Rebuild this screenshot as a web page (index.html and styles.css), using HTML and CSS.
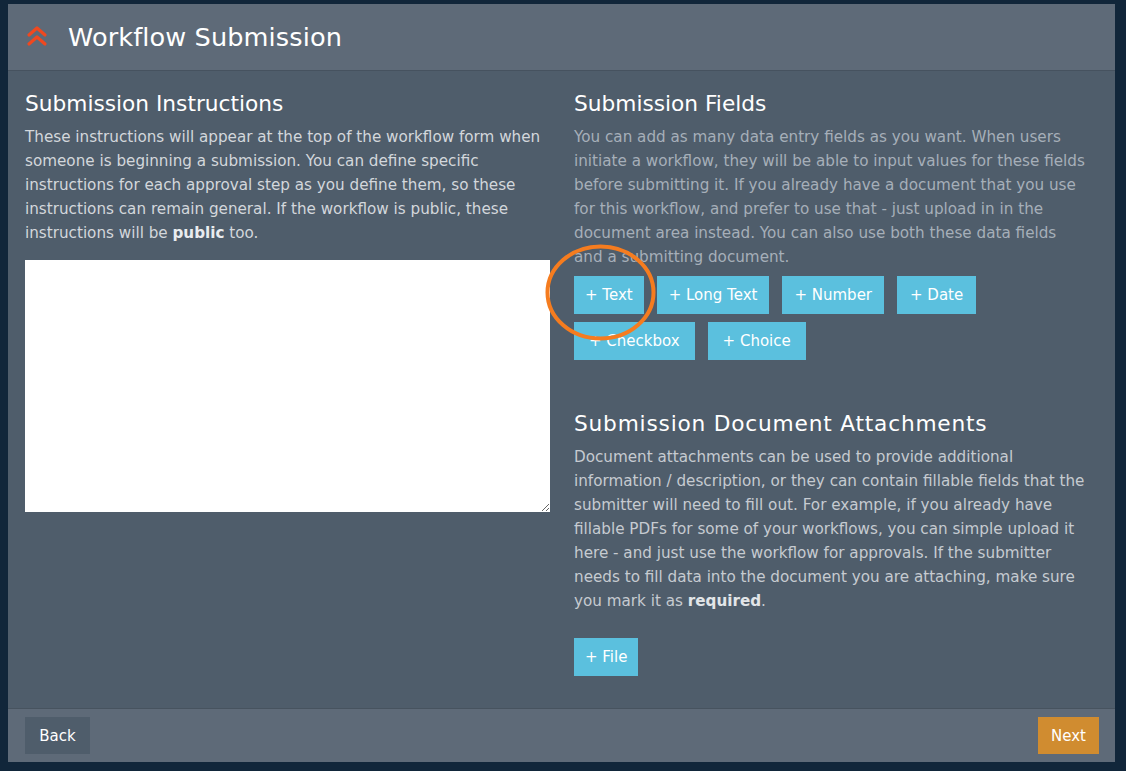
FILE: index.html
```html
<!DOCTYPE html>
<html lang="en">
<head>
<meta charset="utf-8">
<title>Workflow Submission</title>
<link rel="stylesheet" href="styles.css">
</head>
<body>
<div class="panel">
  <header class="header">
    <svg class="logo" width="22" height="22" viewBox="0 0 22 22" aria-hidden="true">
      <polyline points="3,10 11,3 19,10" fill="none" stroke="#f0481f" stroke-width="3.2" stroke-linecap="round" stroke-linejoin="round"/>
      <polyline points="3,19 11,12 19,19" fill="none" stroke="#f0481f" stroke-width="3.2" stroke-linecap="round" stroke-linejoin="round"/>
    </svg>
    <h1 class="title">Workflow Submission</h1>
  </header>
  <main class="content">
    <section class="col">
      <h2 class="heading">Submission Instructions</h2>
      <p class="text text-light">These instructions will appear at the top of the workflow form when<br>someone is beginning a submission. You can define specific<br>instructions for each approval step as you define them, so these<br>instructions can remain general. If the workflow is public, these<br>instructions will be <b>public</b> too.</p>
      <textarea class="instructions"></textarea>
    </section>
    <section class="col">
      <h2 class="heading">Submission Fields</h2>
      <p class="text text-dim">You can add as many data entry fields as you want. When users<br>initiate a workflow, they will be able to input values for these fields<br>before submitting it. If you already have a document that you use<br>for this workflow, and prefer to use that - just upload in in the<br>document area instead. You can also use both these data fields<br>and a submitting document.</p>
      <div class="field-buttons">
        <button class="btn btn-info btn-narrow">+ Text</button>
        <button class="btn btn-info">+ Long Text</button>
        <button class="btn btn-info">+ Number</button>
        <button class="btn btn-info btn-date">+ Date</button>
        <button class="btn btn-info btn-wide">+ Checkbox</button>
        <button class="btn btn-info btn-wide">+ Choice</button>
        <svg class="highlight" width="113" height="99" viewBox="0 0 113 99" aria-hidden="true">
          <ellipse cx="56.5" cy="49.5" rx="53" ry="46" fill="none" stroke="#f57c1f" stroke-width="4"/>
        </svg>
      </div>
      <h2 class="heading heading-attach">Submission Document Attachments</h2>
      <p class="text text-mid">Document attachments can be used to provide additional<br>information / description, or they can contain fillable fields that the<br>submitter will need to fill out. For example, if you already have<br>fillable PDFs for some of your workflows, you can simple upload it<br>here - and just use the workflow for approvals. If the submitter<br>needs to fill data into the document you are attaching, make sure<br>you mark it as <b>required</b>.</p>
      <div class="file-row">
        <button class="btn btn-info btn-file">+ File</button>
      </div>
    </section>
  </main>
  <footer class="footer">
    <button class="btn btn-back">Back</button>
    <button class="btn btn-next">Next</button>
  </footer>
</div>
</body>
</html>
```
FILE: styles.css
```css
* { box-sizing: border-box; }

html, body {
  margin: 0;
  padding: 0;
}

body {
  background: #11263a;
  font-family: "DejaVu Sans", "Liberation Sans", sans-serif;
  height: 771px;
  overflow: hidden;
}

.panel {
  margin: 4px 11px 0 8px;
  height: 758px;
  display: flex;
  flex-direction: column;
  background: #4f5d6b;
}

.header {
  height: 67px;
  flex: none;
  display: flex;
  align-items: center;
  padding-left: 18px;
  background: #5e6a78;
  border-bottom: 1px solid #46525f;
}

.logo {
  margin-right: 20px;
  margin-top: -2px;
}

.title {
  margin: 0;
  font-weight: normal;
  font-size: 25.6px;
  color: #ffffff;
  letter-spacing: 0.1px;
}

.content {
  flex: 1;
  display: grid;
  grid-template-columns: 525px 524px;
  column-gap: 24px;
  padding: 18px 17px 0 17px;
}

.heading {
  margin: 0;
  font-weight: normal;
  font-size: 21.7px;
  line-height: 30px;
  color: #ffffff;
}

.text {
  margin: 6px 0 0 0;
  font-size: 15.2px;
  line-height: 24px;
  white-space: nowrap;
}

.text b { font-weight: bold; }

.text-light { color: #d3d7dc; }
.text-light b { color: #e9ecef; }
.text-dim { color: #a6afb9; }
.text-mid { color: #c6cbd1; }
.text-mid b { color: #e2e5e8; }

.instructions {
  display: block;
  margin-top: 15px;
  width: 525px;
  height: 252px;
  border: none;
  background: #ffffff;
  resize: vertical;
  padding: 6px;
}

.field-buttons {
  position: relative;
  margin-top: 7px;
  display: flex;
  flex-wrap: wrap;
  column-gap: 13px;
  row-gap: 8px;
  width: 420px;
}

.btn {
  border: none;
  font-family: inherit;
  font-size: 15px;
  color: #ffffff;
  height: 38px;
  padding: 0 12px;
  cursor: pointer;
}

.btn-info { background: #5bc0de; }
.btn-narrow { padding: 0 11px; }
.btn-date { padding: 0 13px; }
.btn-wide { padding: 0 15px; }
.btn-file { padding: 0 11px; }

.highlight {
  position: absolute;
  left: -30px;
  top: -33px;
  pointer-events: none;
}

.heading-attach {
  margin-top: 49px;
  letter-spacing: 0.8px;
}

.file-row {
  margin-top: 25px;
}

.footer {
  height: 54px;
  flex: none;
  display: flex;
  justify-content: space-between;
  align-items: center;
  padding: 0 16px 0 17px;
  background: #5e6a78;
  border-top: 1px solid #47535f;
}

.btn-back {
  background: #4f5d6b;
  width: 65px;
  height: 37px;
  padding: 0;
}

.btn-next {
  background: #d08c30;
  width: 61px;
  height: 37px;
  padding: 0;
}
```
